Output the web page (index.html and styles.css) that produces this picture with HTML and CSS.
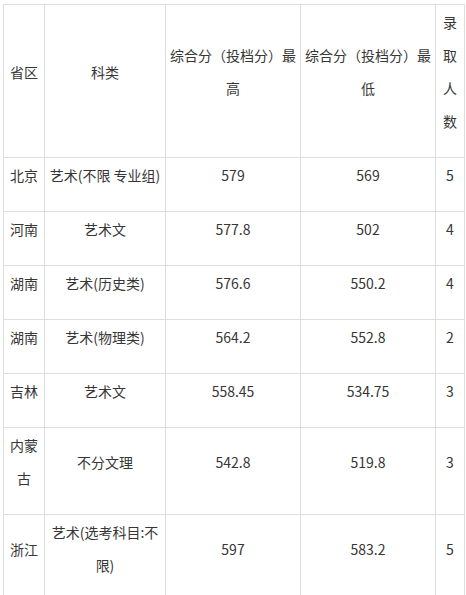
FILE: index.html
```html
<!DOCTYPE html>
<html lang="zh-CN">
<head>
<meta charset="utf-8">
<title>录取分数</title>
<link rel="stylesheet" href="styles.css">
</head>
<body>
<table class="score-table">
  <colgroup>
    <col class="c-prov">
    <col class="c-type">
    <col class="c-high">
    <col class="c-low">
    <col class="c-num">
  </colgroup>
  <tr>
    <td>省区</td>
    <td>科类</td>
    <td>综合分（投档分）最高</td>
    <td>综合分（投档分）最低</td>
    <td>录取人数</td>
  </tr>
  <tr><td>北京</td><td>艺术(不限 专业组)</td><td>579</td><td>569</td><td>5</td></tr>
  <tr><td>河南</td><td>艺术文</td><td>577.8</td><td>502</td><td>4</td></tr>
  <tr><td>湖南</td><td>艺术(历史类)</td><td>576.6</td><td>550.2</td><td>4</td></tr>
  <tr><td>湖南</td><td>艺术(物理类)</td><td>564.2</td><td>552.8</td><td>2</td></tr>
  <tr><td>吉林</td><td>艺术文</td><td>558.45</td><td>534.75</td><td>3</td></tr>
  <tr><td>内蒙古</td><td>不分文理</td><td>542.8</td><td>519.8</td><td>3</td></tr>
  <tr><td>浙江</td><td>艺术(选考科目:不限)</td><td>597</td><td>583.2</td><td>5</td></tr>
</table>
</body>
</html>
```

FILE: styles.css
```css
html, body {
  margin: 0;
  padding: 0;
  background: #ffffff;
}

body {
  padding: 4px 0 0 3px;
  font-family: "Noto Sans CJK SC", "Noto Sans", sans-serif;
  font-size: 14px;
  color: #363636;
}

.score-table {
  border-collapse: collapse;
  table-layout: fixed;
  width: 461px;
}

.c-prov { width: 41px; }
.c-type { width: 121px; }
.c-high { width: 135px; }
.c-low { width: 135px; }
.c-num { width: 29px; }

.score-table td {
  border: 1px solid #dddddd;
  padding: 1px 4px 19px;
  line-height: 33px;
  text-align: center;
  vertical-align: middle;
  word-break: break-all;
}
```
